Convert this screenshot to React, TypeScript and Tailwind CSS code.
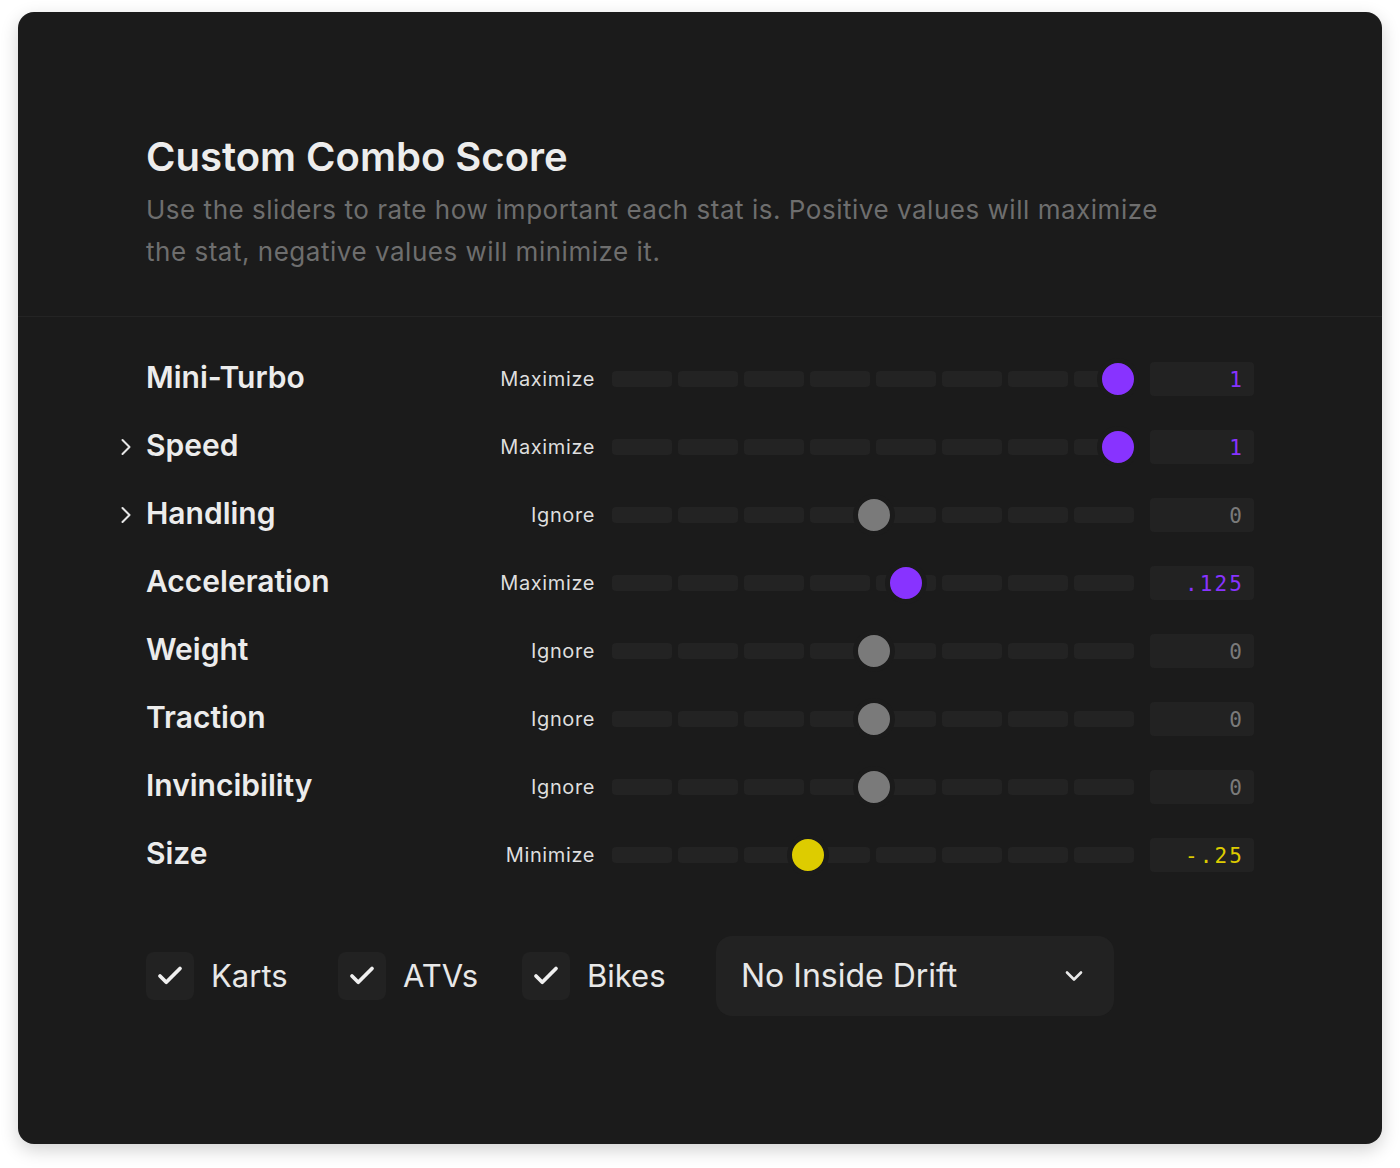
import { Check, ChevronDown, ChevronRight } from "lucide-react";

type Mode = "Maximize" | "Ignore" | "Minimize";

interface Stat {
  name: string;
  mode: Mode;
  value: string;
  thumb: number; // thumb center, px from track start
  expandable?: boolean;
}

const stats: Stat[] = [
  { name: "Mini-Turbo", mode: "Maximize", value: "1", thumb: 506 },
  { name: "Speed", mode: "Maximize", value: "1", thumb: 506, expandable: true },
  { name: "Handling", mode: "Ignore", value: "0", thumb: 262, expandable: true },
  { name: "Acceleration", mode: "Maximize", value: ".125", thumb: 294 },
  { name: "Weight", mode: "Ignore", value: "0", thumb: 262 },
  { name: "Traction", mode: "Ignore", value: "0", thumb: 262 },
  { name: "Invincibility", mode: "Ignore", value: "0", thumb: 262 },
  { name: "Size", mode: "Minimize", value: "-.25", thumb: 196 },
];

const modeStyle: Record<Mode, { thumb: string; text: string }> = {
  Maximize: { thumb: "bg-[#8833ff]", text: "text-[#8833ff]" },
  Ignore: { thumb: "bg-[#7a7a7a]", text: "text-[#7a7a7a]" },
  Minimize: { thumb: "bg-[#ddcc00]", text: "text-[#ddcc00]" },
};

function StatRow({ stat }: { stat: Stat }) {
  const style = modeStyle[stat.mode];
  return (
    <div className="flex items-center h-[68px]">
      {/* Label */}
      <div className="relative w-[320px] flex items-center">
        {stat.expandable && (
          <ChevronRight className="absolute -left-[34px] w-[28px] h-[28px] text-[#e6e6e6]" strokeWidth={1.75} />
        )}
        <span className="text-[30px] font-semibold text-[#ececec] leading-[40px] -mt-[4px]">{stat.name}</span>
      </div>

      {/* Mode */}
      <div className="w-[129px] text-right text-[20px] tracking-[0.03em] text-[#dedede]">{stat.mode}</div>

      {/* Slider track */}
      <div className="relative ml-[17px] w-[522px] h-[34px] flex items-center gap-[6px]">
        {Array.from({ length: 8 }).map((_, i) => (
          <div key={i} className="h-4 w-[60px] rounded-[4px] bg-[#232323]" />
        ))}
        <div
          className={`absolute top-1/2 -translate-x-1/2 -translate-y-1/2 w-[42px] h-[42px] rounded-full border-[5px] border-[#1b1b1b] ${style.thumb}`}
          style={{ left: stat.thumb }}
        />
      </div>

      {/* Value */}
      <div
        className={`ml-4 w-[104px] h-[34px] rounded-[4px] bg-[#222222] flex items-center justify-end pr-[10px] pt-[4px] text-[21px] tracking-[0.1em] ${style.text}`}
        style={{ fontFamily: '"DejaVu Sans Mono", "Liberation Mono", monospace' }}
      >
        {stat.value}
      </div>
    </div>
  );
}

function Checkbox({ label, width }: { label: string; width: string }) {
  return (
    <div className={`flex items-center gap-[17px] ${width}`}>
      <div className="w-[48px] h-[48px] rounded-[8px] bg-[#222222] flex items-center justify-center">
        <Check className="w-[30px] h-[30px] text-[#f0f0f0]" strokeWidth={3} />
      </div>
      <span className="text-[31px] text-[#e8e8e8]">{label}</span>
    </div>
  );
}

export default function App() {
  return (
    <div className="min-h-screen bg-white pt-[12px] px-[18px]" style={{ fontFamily: "Inter, 'Noto Sans', sans-serif" }}>
      <div className="w-[1364px] rounded-[16px] bg-[#1b1b1b] shadow-[0_6px_18px_rgba(0,0,0,0.18)] pb-[128px]">
        {/* Header */}
        <div className="px-[128px] pt-[121px] pb-[43px] border-b border-[#242424]">
          <h1 className="text-[40px] leading-[48px] font-semibold text-[#ededed]">Custom Combo Score</h1>
          <p className="mt-2 max-w-[1040px] text-[26px] leading-[42px] tracking-[0.02em] text-[#6e6e6e]">
            Use the sliders to rate how important each stat is. Positive values will maximize the stat, negative values
            will minimize it.
          </p>
        </div>

        {/* Stats */}
        <div className="px-[128px] pt-[28px]">
          {stats.map(s => (
            <StatRow key={s.name} stat={s} />
          ))}

          {/* Filters */}
          <div className="mt-[47px] flex items-center">
            <Checkbox label="Karts" width="w-[192px]" />
            <Checkbox label="ATVs" width="w-[184px]" />
            <Checkbox label="Bikes" width="w-[194px]" />
            <div className="w-[398px] h-[80px] rounded-[16px] bg-[#222222] flex items-center justify-between pl-[25px] pr-[26px]">
              <span className="text-[32px] text-[#e8e8e8]">No Inside Drift</span>
              <ChevronDown className="w-[28px] h-[28px] text-[#e8e8e8]" strokeWidth={2.25} />
            </div>
          </div>
        </div>
      </div>
    </div>
  );
}
